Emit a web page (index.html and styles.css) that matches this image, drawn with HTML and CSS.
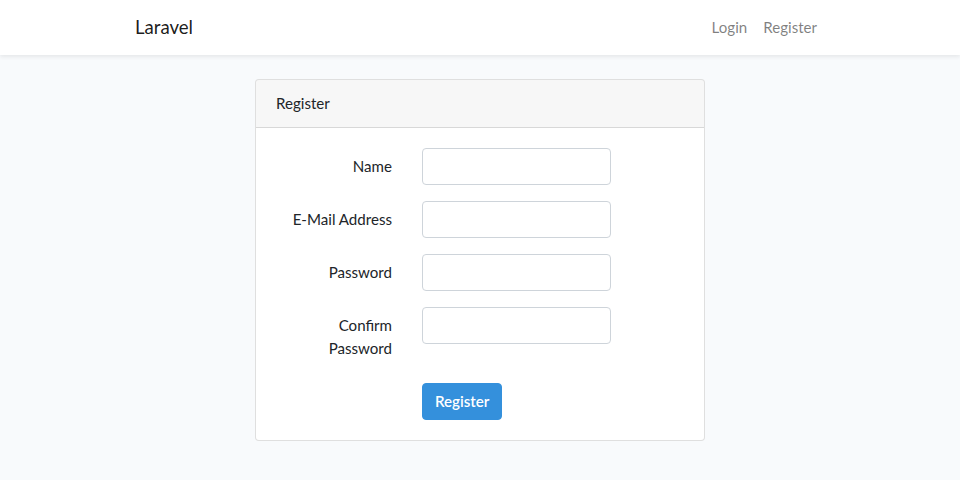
FILE: index.html
```html
<!DOCTYPE html>
<html lang="en">
<head>
<meta charset="utf-8">
<title>Laravel</title>
<link rel="stylesheet" href="styles.css">
</head>
<body>
<nav class="navbar">
  <div class="container nav-inner">
    <a class="brand" href="#">Laravel</a>
    <ul class="nav-links">
      <li><a class="nav-link" href="#">Login</a></li>
      <li><a class="nav-link" href="#">Register</a></li>
    </ul>
  </div>
</nav>
<main class="main">
  <div class="container center">
    <div class="card">
      <div class="card-header">Register</div>
      <div class="card-body">
        <form class="form">
          <div class="form-row">
            <label class="label" for="name">Name</label>
            <div class="field"><input id="name" class="input" type="text"></div>
          </div>
          <div class="form-row">
            <label class="label" for="email">E-Mail Address</label>
            <div class="field"><input id="email" class="input" type="email"></div>
          </div>
          <div class="form-row">
            <label class="label" for="password">Password</label>
            <div class="field"><input id="password" class="input" type="password"></div>
          </div>
          <div class="form-row">
            <label class="label" for="confirm">Confirm Password</label>
            <div class="field"><input id="confirm" class="input" type="password"></div>
          </div>
          <div class="form-row last">
            <div class="label"></div>
            <div class="field"><button class="btn" type="button">Register</button></div>
          </div>
        </form>
      </div>
    </div>
  </div>
</main>
</body>
</html>
```

FILE: styles.css
```css
* { box-sizing: border-box; }
html, body { margin: 0; padding: 0; }
body {
  background: #f8fafc;
  color: #212529;
  font-family: "Lato", "Noto Sans", sans-serif;
  font-size: 15.1px;
  line-height: 23.04px;
}
.container {
  width: 720px;
  margin: 0 auto;
  padding: 0 15px;
}
.navbar {
  background: #fff;
  box-shadow: 0 2px 4px rgba(0, 0, 0, 0.075);
  padding: 8px 0;
}
.nav-inner {
  display: flex;
  align-items: center;
  justify-content: space-between;
}
.brand {
  font-size: 18.6px;
  line-height: 28.8px;
  padding: 5px 0;
  color: rgba(0, 0, 0, 0.9);
  text-decoration: none;
  margin-right: 16px;
}
.nav-links {
  display: flex;
  list-style: none;
  margin: 0;
  padding: 0;
}
.nav-link {
  display: block;
  padding: 8px;
  color: rgba(0, 0, 0, 0.5);
  text-decoration: none;
}
.main { padding: 24px 0; }
.center { display: flex; justify-content: center; }
.card {
  width: 450px;
  background: #fff;
  border: 1px solid rgba(0, 0, 0, 0.125);
  border-radius: 4px;
}
.card-header {
  padding: 12px 20px;
  background: rgba(0, 0, 0, 0.03);
  border-bottom: 1px solid rgba(0, 0, 0, 0.125);
  border-radius: 3px 3px 0 0;
}
.card-body { padding: 20px; }
.form-row {
  display: flex;
  gap: 30px;
  margin-bottom: 16px;
}
.form-row.last { margin-bottom: 0; }
.label {
  width: 116px;
  flex: none;
  text-align: right;
  padding: 7px 0;
}
.field { width: 189px; flex: none; }
.input {
  display: block;
  width: 100%;
  height: 37px;
  padding: 6px 12px;
  font: inherit;
  color: #495057;
  background: #fff;
  border: 1px solid #ced4da;
  border-radius: 4px;
}
.btn {
  display: inline-block;
  font: inherit;
  font-weight: 600;
  padding: 6px 12px;
  line-height: 23px;
  color: #fff;
  background: #3490dc;
  border: 1px solid #3490dc;
  border-radius: 4px;
  cursor: pointer;
}
```
